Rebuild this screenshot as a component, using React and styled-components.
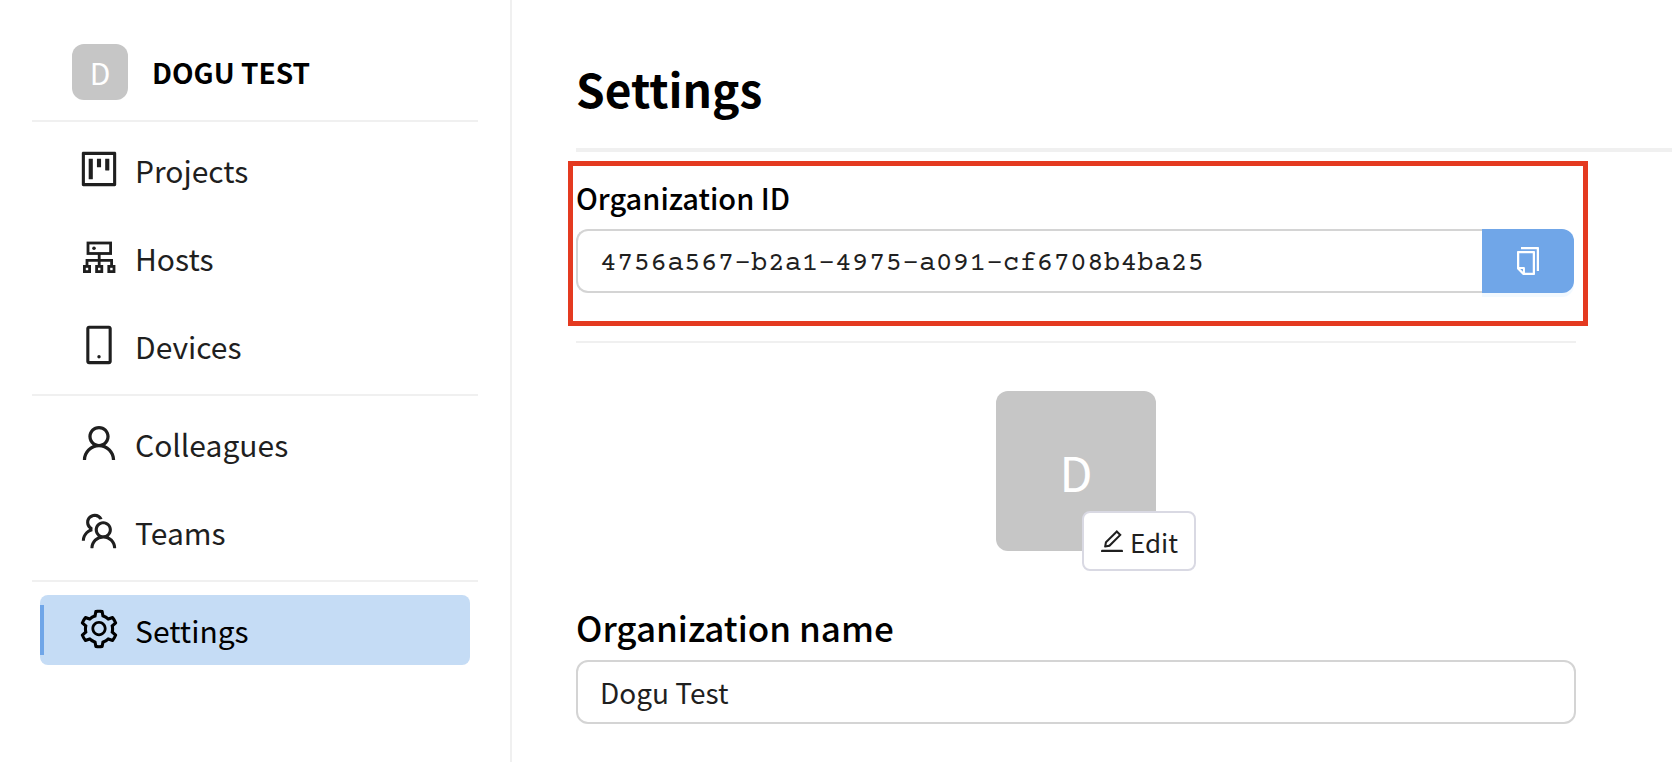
import React from "react";
import styled, { createGlobalStyle, css } from "styled-components";
import {
  AiOutlineProject,
  AiOutlineMobile,
  AiOutlineUser,
  AiOutlineTeam,
  AiOutlineSetting,
  AiOutlineCopy,
  AiOutlineEdit,
} from "react-icons/ai";

const GlobalStyle = createGlobalStyle`
  *, *::before, *::after { box-sizing: border-box; }
  body {
    margin: 0;
    background: #fff;
    color: #1f1f1f;
    font-family: "Noto Sans CJK KR", "Noto Sans", sans-serif;
    font-size: 28px;
  }
  button, input { font: inherit; color: inherit; }
`;

const Layout = styled.div`
  display: flex;
  min-height: 100vh;
  overflow-x: hidden;
`;

const Sidebar = styled.aside`
  flex: 0 0 512px;
  padding: 44px 32px 0;
  border-right: 2px solid #f0f0f0;
`;

const Brand = styled.div`
  display: flex;
  align-items: center;
  gap: 24px;
  padding: 0 40px 20px;
`;

const BrandName = styled.span`
  color: #000;
  font-size: 28px;
  font-weight: 700;
  line-height: 56px;
`;

const Avatar = styled.div`
  display: flex;
  align-items: center;
  justify-content: center;
  width: ${(p) => p.$size}px;
  height: ${(p) => p.$size}px;
  border-radius: 12px;
  background: #c6c6c6;
  color: #fff;
  font-size: ${(p) => p.$text}px;
  font-weight: 400;
  line-height: 1;
`;

const MenuGroup = styled.ul`
  display: flex;
  flex-direction: column;
  gap: 18px;
  margin: 0;
  padding: 13px 8px;
  border-top: 2px solid #f0f0f0;
  list-style: none;
`;

const MenuLink = styled.a`
  position: relative;
  display: flex;
  align-items: center;
  gap: 14px;
  height: 70px;
  padding: 0 37px;
  border-radius: 8px;
  color: #1f1f1f;
  font-size: 30px;
  line-height: 70px;
  text-decoration: none;

  svg {
    width: 44px;
    height: 44px;
    margin-bottom: 2px;
  }

  ${(p) =>
    p.$active &&
    css`
      background: #c5dcf5;
      color: #000;

      &::before {
        content: "";
        position: absolute;
        left: 0;
        top: 10px;
        bottom: 10px;
        width: 4px;
        background: #70a6e8;
      }
    `}
`;

const Main = styled.main`
  flex: 1;
  min-width: 0;
  padding-left: 64px;
`;

const PageHeader = styled.header`
  padding: 56px 0 28px;
  border-bottom: 4px solid #f0f0f0;
`;

const Title = styled.h1`
  margin: 0;
  color: #000;
  font-size: 46px;
  font-weight: 700;
  line-height: 64px;
`;

const Content = styled.div`
  padding: 9px 96px 38px 0;
`;

const Highlight = styled.section`
  margin: 0 -12px 0 -8px;
  padding: 9px 9px 28px 3px;
  border: 5px solid #e43a20;
`;

const Label = styled.label`
  display: block;
  margin-bottom: ${(p) => (p.$large ? 9 : 10)}px;
  color: #000;
  font-size: ${(p) => (p.$large ? 35 : 29)}px;
  font-weight: 500;
  line-height: ${(p) => (p.$large ? 48 : 44)}px;
`;

const InputGroup = styled.div`
  display: flex;
`;

const TextInput = styled.input`
  display: block;
  width: 100%;
  min-width: 0;
  height: 64px;
  padding: 0 22px;
  border: 2px solid #d4d4d4;
  border-radius: 12px;
  outline: 0;
  background: #fff;

  ${(p) =>
    p.$joined &&
    css`
      padding-top: 6px;
      border-right: 0;
      border-radius: 12px 0 0 12px;
      font-family: "Courier Prime", "Liberation Mono", monospace;
    `}
`;

const CopyButton = styled.button`
  display: flex;
  flex: 0 0 92px;
  align-items: center;
  justify-content: center;
  height: 64px;
  padding: 0;
  border: 0;
  border-radius: 0 12px 12px 0;
  background: #70a6e8;
  box-shadow: 0 4px 0 rgba(5, 145, 255, 0.05);
  color: #fff;

  svg {
    width: 32px;
    height: 32px;
  }
`;

const Divider = styled.hr`
  margin: 15px 0 48px;
  border: 0;
  border-top: 2px solid #f0f0f0;
`;

const AvatarEditor = styled.div`
  position: relative;
  width: 160px;
  margin: 0 auto 52px;
`;

const EditButton = styled.button`
  position: absolute;
  right: -40px;
  bottom: -20px;
  display: flex;
  align-items: center;
  justify-content: center;
  gap: 4px;
  width: 114px;
  height: 60px;
  padding: 0 2px 0 0;
  border: 2px solid #d9d9e3;
  border-radius: 8px;
  background: #fff;
  font-size: 26px;

  svg {
    width: 28px;
    height: 28px;
  }
`;

function HostsIcon() {
  return (
    <svg viewBox="-6 -6 44 44" fill="none" stroke="currentColor" strokeWidth="2.8" aria-hidden="true">
      <rect x="5" y="2" width="22.6" height="10.5" />
      <circle cx="11" cy="7.2" r="1.8" fill="currentColor" stroke="none" />
      <path d="M16.2 13v11M4 24v-4.6h24.6v4.6" />
      <rect x="1.4" y="25.4" width="5.2" height="5.2" />
      <rect x="13.6" y="25.4" width="5.2" height="5.2" />
      <rect x="25.8" y="25.4" width="5.2" height="5.2" />
    </svg>
  );
}

const MENU = [
  [
    { name: "Projects", icon: AiOutlineProject },
    { name: "Hosts", icon: HostsIcon },
    { name: "Devices", icon: AiOutlineMobile },
  ],
  [
    { name: "Colleagues", icon: AiOutlineUser },
    { name: "Teams", icon: AiOutlineTeam },
  ],
  [{ name: "Settings", icon: AiOutlineSetting, active: true }],
];

export default function App() {
  return (
    <>
      <GlobalStyle />
      <Layout>
        <Sidebar>
          <Brand>
            <Avatar $size={56} $text={30}>D</Avatar>
            <BrandName>DOGU TEST</BrandName>
          </Brand>
          <nav>
            {MENU.map((group) => (
              <MenuGroup key={group[0].name}>
                {group.map(({ name, icon: Icon, active }) => (
                  <li key={name}>
                    <MenuLink href="#" $active={active} aria-current={active ? "page" : undefined}>
                      <Icon />
                      {name}
                    </MenuLink>
                  </li>
                ))}
              </MenuGroup>
            ))}
          </nav>
        </Sidebar>
        <Main>
          <PageHeader>
            <Title>Settings</Title>
          </PageHeader>
          <Content>
            <Highlight>
              <Label htmlFor="organization-id">Organization ID</Label>
              <InputGroup>
                <TextInput
                  id="organization-id"
                  $joined
                  readOnly
                  value="4756a567-b2a1-4975-a091-cf6708b4ba25"
                />
                <CopyButton type="button" aria-label="Copy">
                  <AiOutlineCopy />
                </CopyButton>
              </InputGroup>
            </Highlight>
            <Divider />
            <AvatarEditor>
              <Avatar $size={160} $text={48}>D</Avatar>
              <EditButton type="button">
                <AiOutlineEdit />
                Edit
              </EditButton>
            </AvatarEditor>
            <Label $large htmlFor="organization-name">Organization name</Label>
            <TextInput id="organization-name" defaultValue="Dogu Test" />
          </Content>
        </Main>
      </Layout>
    </>
  );
}
